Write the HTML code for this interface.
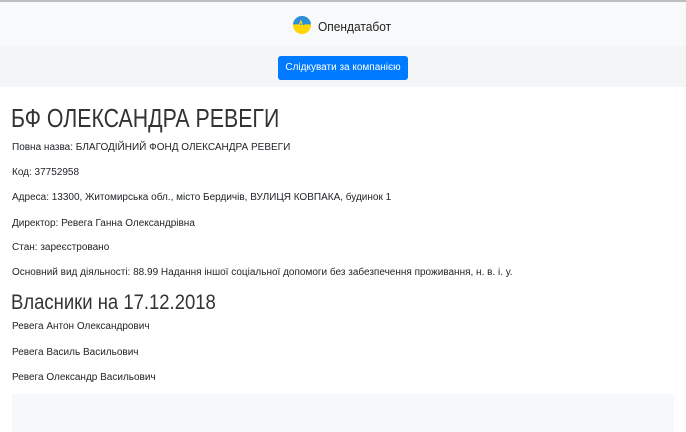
<!DOCTYPE html>
<html><head><meta charset="utf-8"><style>
*{margin:0;padding:0;box-sizing:border-box}
body{width:686px;height:432px;overflow:hidden;background:#fff;font-family:"Liberation Sans",sans-serif;color:#212529;position:relative}
.hdr{position:absolute;left:0;top:0;width:686px;height:46px;background:#f8f9fa;border-top:2px solid #bdbdbd;box-shadow:0 1px 3px rgba(0,0,0,.08)}
.logo{position:absolute;left:293px;top:14px;width:18px;height:18px;border-radius:50%;overflow:hidden;background:#ffd500}
.logo:before{content:"";position:absolute;left:0;top:0;width:18px;height:9px;background:#2b8fe0}
.brand{position:absolute;left:318px;top:17px;font-size:13px;color:#222;transform:scaleX(.92);transform-origin:left}
.band{position:absolute;left:0;top:46px;width:686px;height:41px;background:#f4f5f7}
.btn{position:absolute;left:278px;top:56px;width:130px;height:24px;background:#007bff;border-radius:3px;color:#fff;font-size:10px;text-align:center;line-height:24px}
.t{position:absolute;left:12px;font-size:10px;white-space:nowrap}
h1{position:absolute;left:11px;top:103px;font-size:26px;color:#333;white-space:nowrap;transform:scaleX(.82);transform-origin:left;font-weight:normal}
h2{position:absolute;left:11px;top:291px;font-size:21px;font-weight:normal;color:#333;white-space:nowrap;transform:scaleX(.88);transform-origin:left}
.box{position:absolute;left:12px;top:394px;width:662px;height:38px;background:#f7f8fa}
</style></head><body>
<div class="hdr"><div class="logo"><svg width="18" height="18" style="position:absolute;left:0;top:0"><path d="M0 9H6L8 5L10 12L12 9H18" stroke="#ffd500" stroke-width="1.2" fill="none"/></svg></div><div class="brand">Опендатабот</div></div>
<div class="band"></div>
<div class="btn">Слідкувати за компанією</div>
<h1>БФ ОЛЕКСАНДРА РЕВЕГИ</h1>
<div class="t" style="top:142px">Повна назва: БЛАГОДІЙНИЙ ФОНД ОЛЕКСАНДРА РЕВЕГИ</div>
<div class="t" style="top:167px">Код: 37752958</div>
<div class="t" style="top:192px">Адреса: 13300, Житомирська обл., місто Бердичів, ВУЛИЦЯ КОВПАКА, будинок 1</div>
<div class="t" style="top:218px">Директор: Ревега Ганна Олександрівна</div>
<div class="t" style="top:242px">Стан: зареєстровано</div>
<div class="t" style="top:267px">Основний вид діяльності: 88.99 Надання іншої соціальної допомоги без забезпечення проживання, н. в. і. у.</div>
<h2>Власники на 17.12.2018</h2>
<div class="t" style="top:321px">Ревега Антон Олександрович</div>
<div class="t" style="top:347px">Ревега Василь Васильович</div>
<div class="t" style="top:372px">Ревега Олександр Васильович</div>
<div class="box"></div>
</body></html>
